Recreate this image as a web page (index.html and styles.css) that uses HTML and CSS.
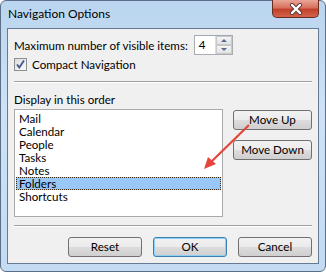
FILE: index.html
```html
<!DOCTYPE html>
<html lang="en">
<head>
    <meta charset="UTF-8">
    <title>Navigation Options</title>
    <link rel="stylesheet" href="styles.css">
</head>
<body>

    <div class="window">
        <div class="titlebar">
            <span class="title">Navigation Options</span>
            <div class="close-btn">
                <svg width="18" height="12" viewBox="0 0 18 12">
                    <path d="M5 2 L13 10 M13 2 L5 10" stroke="#5a3a3a" stroke-width="4.2" stroke-linecap="round"/>
                    <path d="M5 2 L13 10 M13 2 L5 10" stroke="#ffffff" stroke-width="2.4" stroke-linecap="round"/>
                </svg>
            </div>
        </div>

        <div class="content">
            <div class="row-max">
                <span>Maximum number of visible items:</span>
                <div class="spinner">
                    <div class="spin-value">4</div>
                    <div class="spin-btns">
                        <div class="spin-btn"><span class="tri-up"></span></div>
                        <div class="spin-btn"><span class="tri-down"></span></div>
                    </div>
                </div>
            </div>

            <label class="row-check">
                <span class="checkbox">
                    <svg width="11" height="11" viewBox="0 0 11 11">
                        <path d="M2 5.5 L4.3 8.5 L9 1.5" fill="none" stroke="#3f5592" stroke-width="1.8"/>
                    </svg>
                </span>
                Compact Navigation
            </label>

            <div class="separator"></div>

            <div class="order-label">Display in this order</div>

            <div class="order-area">
                <ul class="listbox">
                    <li>Mail</li>
                    <li>Calendar</li>
                    <li>People</li>
                    <li>Tasks</li>
                    <li>Notes</li>
                    <li class="selected">Folders</li>
                    <li>Shortcuts</li>
                </ul>
                <div class="move-btns">
                    <button class="btn">Move Up</button>
                    <button class="btn">Move Down</button>
                </div>
            </div>

            <div class="separator bottom-sep"></div>

            <div class="footer-btns">
                <button class="btn">Reset</button>
                <button class="btn btn-default">OK</button>
                <button class="btn">Cancel</button>
            </div>
        </div>

        <svg class="arrow" width="326" height="272" viewBox="0 0 326 272">
            <line x1="249" y1="125" x2="211" y2="162" stroke="#e5453b" stroke-width="2.2"/>
            <path d="M204 169 L208 157 L216 164 Z" fill="#e5453b"/>
        </svg>
    </div>

</body>
</html>
```

FILE: styles.css
```css
* {
    margin: 0;
    padding: 0;
    box-sizing: border-box;
}

body {
    background-color: #ffffff;
    font-family: Lato, "Noto Sans", sans-serif;
    font-size: 11.6px;
    color: #000;
}

.window {
    position: relative;
    width: 326px;
    height: 272px;
    border: 1px solid #5d6f88;
    border-radius: 6px;
    background: linear-gradient(180deg, #bad5ef 0%, #cde2f6 40%, #c3dbf2 100%);
}

.titlebar {
    display: flex;
    justify-content: space-between;
    height: 27px;
}

.title {
    padding: 5px 0 0 7px;
    font-size: 12px;
    color: #000;
}

.close-btn {
    width: 47px;
    height: 18px;
    margin-right: 6px;
    margin-top: -1px;
    border: 1px solid #6b2a22;
    border-top: none;
    border-radius: 0 0 5px 5px;
    background: linear-gradient(180deg, #e9a597 0%, #d8715e 45%, #c2402a 55%, #d2644a 100%);
    display: flex;
    justify-content: center;
    align-items: center;
}

.content {
    margin-left: 6px;
    width: 312px;
    height: 236px;
    border: 1px solid #677a93;
    background-color: #f0f0f0;
    padding: 6px 6px 0 6px;
}

.row-max {
    display: flex;
    align-items: center;
    height: 20px;
    gap: 6px;
}

.spinner {
    display: flex;
    height: 20px;
    border: 1px solid #abadb3;
    border-top-color: #9fa7b6;
    background: #fff;
}

.spin-value {
    width: 21px;
    padding-left: 4px;
    line-height: 18px;
    border-right: 1px solid #d9dde5;
}

.spin-btns {
    display: flex;
    flex-direction: column;
    width: 16px;
}

.spin-btn {
    flex: 1;
    display: flex;
    justify-content: center;
    align-items: center;
    background: linear-gradient(180deg, #f4f4f4, #e3e3e3);
    border: 1px solid #c9c9c9;
}

.tri-up {
    border-left: 3px solid transparent;
    border-right: 3px solid transparent;
    border-bottom: 3px solid #5a6b90;
}

.tri-down {
    border-left: 3px solid transparent;
    border-right: 3px solid transparent;
    border-top: 3px solid #5a6b90;
}

.row-check {
    display: flex;
    align-items: center;
    gap: 5px;
    margin-top: 3px;
    height: 13px;
}

.checkbox {
    width: 13px;
    height: 13px;
    border: 1px solid #8e8f8f;
    background: linear-gradient(135deg, #dcdcdc, #fbfbfb);
    display: flex;
    justify-content: center;
    align-items: center;
}

.separator {
    height: 2px;
    margin-top: 10px;
    border-top: 1px solid #a0a0a0;
    border-bottom: 1px solid #ffffff;
}

.order-label {
    margin-top: 9px;
    height: 16px;
    line-height: 16px;
}

.order-area {
    display: flex;
    gap: 10px;
    margin-top: 1px;
}

.listbox {
    list-style: none;
    width: 210px;
    height: 108px;
    border: 1px solid #a9a9a9;
    background: #fff;
    padding: 2px 1px;
}

.listbox li {
    height: 13px;
    line-height: 13px;
    padding-left: 3px;
}

.listbox li.selected {
    background-color: #99c7f8;
    outline: 1px dotted #3a2a10;
    outline-offset: -1px;
}

.move-btns {
    display: flex;
    flex-direction: column;
    gap: 10px;
    padding-top: 1px;
}

.btn {
    width: 79px;
    height: 20px;
    border: 1px solid #707070;
    border-radius: 3px;
    background: linear-gradient(180deg, #f2f2f2 0%, #ebebeb 49%, #dddddd 50%, #cfcfcf 100%);
    font-family: Lato, "Noto Sans", sans-serif;
    font-size: 11.6px;
    color: #000;
    line-height: 16px;
}

.bottom-sep {
    margin-top: 8px;
}

.footer-btns {
    display: flex;
    justify-content: flex-end;
    gap: 11px;
    margin-top: 10px;
}

.footer-btns .btn {
    width: 74px;
}

.btn-default {
    border-color: #3c7fb1;
    box-shadow: inset 0 0 0 1px #8fd1f4;
}

.arrow {
    position: absolute;
    left: -1px;
    top: -1px;
    pointer-events: none;
}
```
